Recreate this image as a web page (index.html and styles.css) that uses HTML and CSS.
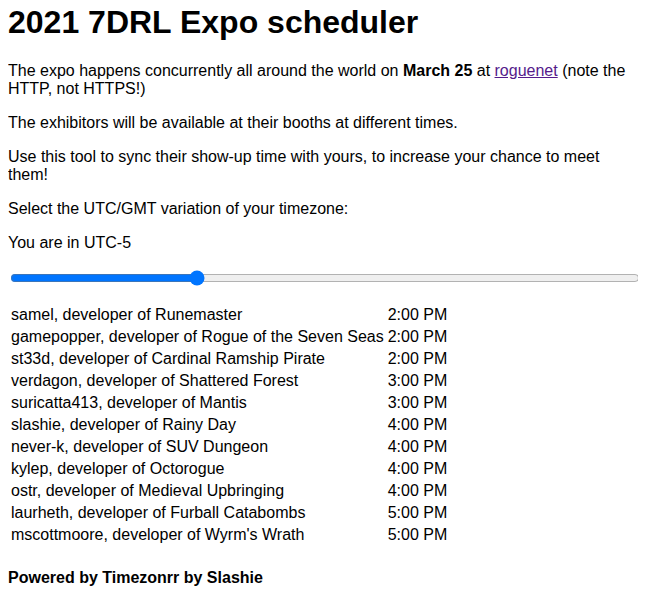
FILE: index.html
```html
<!DOCTYPE html>
<html>
<head>
<meta charset="utf-8">
<title>2021 7DRL Expo scheduler</title>
<link rel="stylesheet" href="styles.css">
</head>
<body class="page">
<h1 class="title">2021 7DRL Expo scheduler</h1>
<p>The expo happens concurrently all around the world on <b>March 25</b> at <a class="link" href="#">roguenet</a> (note the HTTP, not HTTPS!)</p>
<p>The exhibitors will be available at their booths at different times.</p>
<p>Use this tool to sync their show-up time with yours, to increase your chance to meet them!</p>
<p>Select the UTC/GMT variation of your timezone:</p>
<p>You are in UTC-5</p>
<input class="slider" type="range" min="-12" max="12" value="-5">
<table class="schedule">
<tr><td>samel, developer of Runemaster</td><td>2:00 PM</td></tr>
<tr><td>gamepopper, developer of Rogue of the Seven Seas</td><td>2:00 PM</td></tr>
<tr><td>st33d, developer of Cardinal Ramship Pirate</td><td>2:00 PM</td></tr>
<tr><td>verdagon, developer of Shattered Forest</td><td>3:00 PM</td></tr>
<tr><td>suricatta413, developer of Mantis</td><td>3:00 PM</td></tr>
<tr><td>slashie, developer of Rainy Day</td><td>4:00 PM</td></tr>
<tr><td>never-k, developer of SUV Dungeon</td><td>4:00 PM</td></tr>
<tr><td>kylep, developer of Octorogue</td><td>4:00 PM</td></tr>
<tr><td>ostr, developer of Medieval Upbringing</td><td>4:00 PM</td></tr>
<tr><td>laurheth, developer of Furball Catabombs</td><td>5:00 PM</td></tr>
<tr><td>mscottmoore, developer of Wyrm's Wrath</td><td>5:00 PM</td></tr>
</table>
<h4 class="footer">Powered by Timezonrr by Slashie</h4>
</body>
</html>
```
FILE: styles.css
```css
.page {
  font-family: "Liberation Sans", Arial, sans-serif;
  font-size: 16px;
  color: #000;
  background: #fff;
  margin: 0 8px 8px;
}
.title {
  margin-top: 4px;
}
.link {
  color: #551a8b;
}
.slider {
  width: 100%;
  accent-color: #0075ff;
}
.schedule {
  margin-top: 13px;
}
.footer {
  margin-top: 22px;
}
```
